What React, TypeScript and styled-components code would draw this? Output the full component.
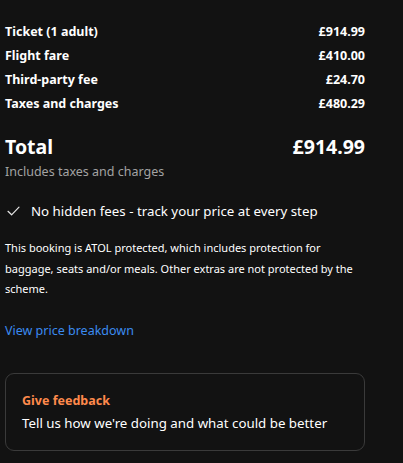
import React, { FC } from 'react'
import styled, { createGlobalStyle } from 'styled-components'

const GlobalStyle = createGlobalStyle`
  html, body {
    margin: 0;
    padding: 0;
    background: #121212;
  }
  body {
    font-family: 'Segoe UI', 'Noto Sans', sans-serif;
    color: #ffffff;
  }
`

const Page = styled.div`
  width: 403px;
  height: 463px;
  box-sizing: border-box;
  padding: 19px 38px 0 5px;
  display: flex;
  flex-direction: column;
`

const Breakdown = styled.div`
  display: flex;
  flex-direction: column;
`

const Row = styled.div`
  display: flex;
  justify-content: space-between;
  align-items: center;
  height: 24px;
  font-size: 12.5px;
  font-weight: 700;
`

const TotalRow = styled.div`
  display: flex;
  justify-content: space-between;
  align-items: center;
  margin-top: 16px;
  height: 30px;
  font-size: 19.5px;
  font-weight: 700;
`

const Subtle = styled.div`
  font-size: 12.5px;
  color: #a3a3a3;
  margin-top: 2px;
`

const Promise = styled.div`
  display: flex;
  align-items: center;
  gap: 11px;
  margin-top: 22px;
  font-size: 13.3px;
  padding-left: 2px;
`

const Notice = styled.p`
  margin: 18px 0 0;
  font-size: 11px;
  line-height: 20.5px;
`

const Link = styled.a`
  margin-top: 22px;
  font-size: 12.5px;
  color: #3b8bf0;
  text-decoration: none;
  cursor: pointer;
`

const Card = styled.div`
  margin-top: 34px;
  border: 1px solid #3a3a3a;
  border-radius: 9px;
  padding: 18px 16px 18px;
  display: flex;
  flex-direction: column;
  gap: 5px;
`

const CardTitle = styled.div`
  font-size: 12.5px;
  font-weight: 700;
  color: #ff8a4c;
`

const CardText = styled.div`
  font-size: 13.3px;
`

const Check: FC = () => (
  <svg width="13" height="10" viewBox="0 0 13 10" fill="none">
    <path d="M1 5.3 L4.6 8.8 L12 1.2" stroke="#e6e6e6" strokeWidth="1.2" strokeLinecap="round" strokeLinejoin="round" />
  </svg>
)

const lines = [
  { label: 'Ticket (1 adult)', amount: '£914.99' },
  { label: 'Flight fare', amount: '£410.00' },
  { label: 'Third-party fee', amount: '£24.70' },
  { label: 'Taxes and charges', amount: '£480.29' },
]

const App: FC = () => (
  <>
    <GlobalStyle />
    <Page>
      <Breakdown>
        {lines.map((l) => (
          <Row key={l.label}>
            <span>{l.label}</span>
            <span>{l.amount}</span>
          </Row>
        ))}
      </Breakdown>
      <TotalRow>
        <span>Total</span>
        <span>£914.99</span>
      </TotalRow>
      <Subtle>Includes taxes and charges</Subtle>
      <Promise>
        <Check />
        <span>No hidden fees - track your price at every step</span>
      </Promise>
      <Notice>
        This booking is ATOL protected, which includes protection for baggage, seats and/or meals. Other extras are not protected by the scheme.
      </Notice>
      <Link>View price breakdown</Link>
      <Card>
        <CardTitle>Give feedback</CardTitle>
        <CardText>Tell us how we're doing and what could be better</CardText>
      </Card>
    </Page>
  </>
)

export default App
